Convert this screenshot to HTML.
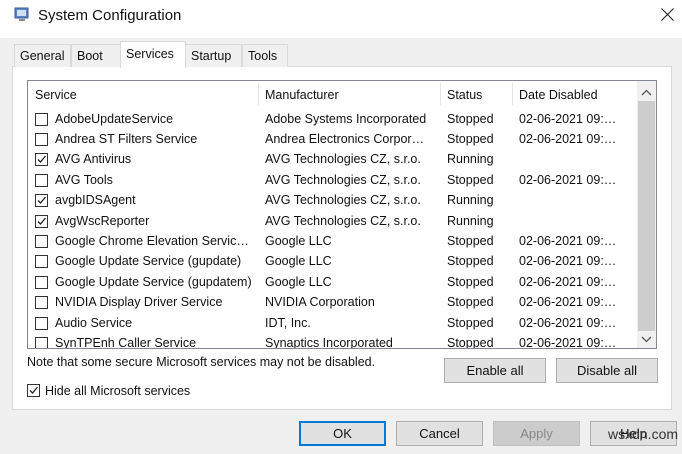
<!DOCTYPE html><html><head><style>
*{margin:0;padding:0;box-sizing:border-box}
body{width:682px;height:454px;background:#f0f0f0;font-family:"Liberation Sans",sans-serif;font-size:12.5px;color:#111;position:relative;overflow:hidden}
.a{position:absolute;white-space:nowrap}
.title{left:0;top:0;width:682px;height:38px;background:#fff}
.panel{left:12px;top:66px;width:660px;height:344px;background:#fff;border:1px solid #d9d9d9}
.tab{top:44px;height:23px;border:1px solid #d9d9d9;border-bottom:none;background:#f0f0f0;padding:4px 5px 0}
.list{left:27px;top:80px;width:630px;height:269px;border:1px solid #828790;background:#fff;overflow:hidden}
.cb{width:13px;height:13px;border:1px solid #333;background:#fff}
.btn{height:25px;border:1px solid #adadad;background:#e1e1e1;text-align:center;line-height:23px;font-size:13px}
.sep{top:2px;width:1px;height:22px;background:#e5e5e5}
</style></head><body>
<div class="a title"></div>
<svg class="a" style="left:14px;top:7px" width="16" height="16"><rect x="1" y="1" width="13" height="10" fill="#5b87c8" stroke="#3a5a90"/><rect x="3" y="3" width="9" height="6" fill="#cfe0f5"/><rect x="5" y="12" width="6" height="2" fill="#888"/></svg>
<div class="a" style="left:38px;top:7px;font-size:15px">System Configuration</div>
<svg class="a" style="left:661px;top:8px" width="13" height="13"><path d="M0.5 0.5L12.5 12.5M12.5 0.5L0.5 12.5" stroke="#222" stroke-width="1.1"/></svg>
<div class="a panel"></div>
<div class="a tab" style="left:14px;width:57px">General</div>
<div class="a tab" style="left:71px;width:50px">Boot</div>
<div class="a tab" style="left:185px;width:57px">Startup</div>
<div class="a tab" style="left:242px;width:46px">Tools</div>
<div class="a tab" style="left:120px;top:41px;height:27px;width:66px;background:#fff;padding-top:5px">Services</div>
<div class="a list">
<div class="a" style="left:7px;top:7px">Service</div>
<div class="a sep" style="left:230px"></div>
<div class="a" style="left:237px;top:7px">Manufacturer</div>
<div class="a sep" style="left:412px"></div>
<div class="a" style="left:419px;top:7px">Status</div>
<div class="a sep" style="left:484px"></div>
<div class="a" style="left:491px;top:7px">Date Disabled</div>
<div class="a" style="left:609px;top:0;width:19px;height:268px;background:#f0f0f0"></div>
<div class="a" style="left:610px;top:20px;width:17px;height:230px;background:#cdcdcd"></div>
<svg class="a" style="left:613px;top:8px" width="11" height="7"><path d="M1 6L5.5 1.5L10 6" fill="none" stroke="#555" stroke-width="1.3"/></svg>
<svg class="a" style="left:613px;top:255px" width="11" height="7"><path d="M1 1L5.5 5.5L10 1" fill="none" stroke="#555" stroke-width="1.3"/></svg>
<div id="rows"></div>
</div>
<div class="a" style="left:27px;top:355px">Note that some secure Microsoft services may not be disabled.</div>
<div class="a btn" style="left:444px;top:358px;width:102px">Enable all</div>
<div class="a btn" style="left:556px;top:358px;width:102px">Disable all</div>
<div class="a cb" style="left:27px;top:384px"></div><svg class="a" style="left:28px;top:385px" width="11" height="11"><path d="M2 5.5L4.5 8L9.5 2" fill="none" stroke="#222" stroke-width="1.3"/></svg>
<div class="a" style="left:45px;top:384px">Hide all Microsoft services</div>
<div class="a btn" style="left:299px;top:421px;width:87px;border:2px solid #0078d7;line-height:21px">OK</div>
<div class="a btn" style="left:396px;top:421px;width:87px">Cancel</div>
<div class="a btn" style="left:493px;top:421px;width:87px;color:#888;border-color:#bfbfbf;background:#ccc">Apply</div>
<div class="a btn" style="left:590px;top:421px;width:87px">Help</div>
<div class="a" style="left:608px;top:426px;font-size:14px;color:#333">wsxdn.com</div>
<script>
var d=[["AdobeUpdateService","Adobe Systems Incorporated","Stopped",1,0],["Andrea ST Filters Service","Andrea Electronics Corpor…","Stopped",1,0],["AVG Antivirus","AVG Technologies CZ, s.r.o.","Running",0,1],["AVG Tools","AVG Technologies CZ, s.r.o.","Stopped",1,0],["avgbIDSAgent","AVG Technologies CZ, s.r.o.","Running",0,1],["AvgWscReporter","AVG Technologies CZ, s.r.o.","Running",0,1],["Google Chrome Elevation Servic…","Google LLC","Stopped",1,0],["Google Update Service (gupdate)","Google LLC","Stopped",1,0],["Google Update Service (gupdatem)","Google LLC","Stopped",1,0],["NVIDIA Display Driver Service","NVIDIA Corporation","Stopped",1,0],["Audio Service","IDT, Inc.","Stopped",1,0],["SynTPEnh Caller Service","Synaptics Incorporated","Stopped",1,0]];
var h="";d.forEach(function(r,i){var y=30.5+i*20.4;
h+='<div class="a cb" style="left:7px;top:'+(y+1)+'px"></div>'+(r[4]?'<svg class="a" style="left:8px;top:'+(y+2)+'px" width="11" height="11"><path d="M2 5.5L4.5 8L9.5 2" fill="none" stroke="#222" stroke-width="1.3"/></svg>':'')+
'<div class="a" style="left:27px;top:'+y+'px">'+r[0]+'</div><div class="a" style="left:237px;top:'+y+'px">'+r[1]+'</div><div class="a" style="left:419px;top:'+y+'px">'+r[2]+'</div>'+(r[3]?'<div class="a" style="left:491px;top:'+y+'px">02-06-2021 09:…</div>':'');});
document.getElementById("rows").innerHTML=h;
</script>
</body></html>
